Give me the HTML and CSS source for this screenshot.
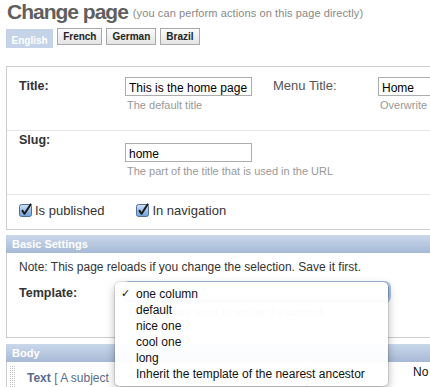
FILE: index.html
```html
<!DOCTYPE html>
<html lang="en">
<head>
<meta charset="utf-8">
<title>Change page</title>
<link rel="stylesheet" href="styles.css">
</head>
<body>
<div class="page">
  <h1 class="page-title">Change page<small class="page-subtitle">(you can perform actions on this page directly)</small></h1>

  <div class="tabs">
    <span class="tab tab-active">English</span>
    <span class="tab">French</span>
    <span class="tab">German</span>
    <span class="tab">Brazil</span>
  </div>

  <div class="module module-main">
    <div class="form-row row-title">
      <label class="field-label">Title:</label>
      <div class="field">
        <input class="text-input" type="text" value="This is the home page">
        <p class="help">The default title</p>
      </div>
      <label class="field-label-plain">Menu Title:</label>
      <div class="field">
        <input class="text-input" type="text" value="Home">
        <p class="help">Overwrite what is displayed in the menu</p>
      </div>
    </div>

    <div class="form-row row-slug">
      <label class="field-label">Slug:</label>
      <div class="field">
        <input class="text-input" type="text" value="home">
        <p class="help">The part of the title that is used in the URL</p>
      </div>
    </div>

    <div class="form-row row-check">
      <label class="check">
        <svg class="checkbox" width="14" height="14" viewBox="0 0 14 14">
          <defs><linearGradient id="cb1" x1="0" y1="0" x2="0" y2="1"><stop offset="0" stop-color="#cfe2f7"/><stop offset="1" stop-color="#6e9fd8"/></linearGradient></defs>
          <rect x="0.5" y="1.5" width="12" height="12" rx="2" fill="url(#cb1)" stroke="#4f6f9c"/>
          <path d="M3 7.2 L5.6 10.8 L12 0.8" fill="none" stroke="#1a1a1a" stroke-width="2" stroke-linejoin="round"/>
        </svg>
        <span>Is published</span>
      </label>
      <label class="check">
        <svg class="checkbox" width="14" height="14" viewBox="0 0 14 14">
          <defs><linearGradient id="cb2" x1="0" y1="0" x2="0" y2="1"><stop offset="0" stop-color="#cfe2f7"/><stop offset="1" stop-color="#6e9fd8"/></linearGradient></defs>
          <rect x="0.5" y="1.5" width="12" height="12" rx="2" fill="url(#cb2)" stroke="#4f6f9c"/>
          <path d="M3 7.2 L5.6 10.8 L12 0.8" fill="none" stroke="#1a1a1a" stroke-width="2" stroke-linejoin="round"/>
        </svg>
        <span>In navigation</span>
      </label>
    </div>
  </div>

  <div class="module module-basic">
    <h2 class="module-header">Basic Settings</h2>
    <div class="module-body">
      <p class="note">Note: This page reloads if you change the selection. Save it first.</p>
      <div class="template-row">
        <label class="field-label template-label">Template:</label>
        <div class="field">
          <div class="select-wrap">
            <div class="select"></div>
            <ul class="popup">
              <li class="popup-item"><span class="popup-check">&#10003;</span>one column</li>
              <li class="popup-item">default</li>
              <li class="popup-item">nice one</li>
              <li class="popup-item">cool one</li>
              <li class="popup-item">long</li>
              <li class="popup-item">Inherit the template of the nearest ancestor</li>
            </ul>
          </div>
          <p class="help help-template">The template used to render the content.</p>
        </div>
      </div>
    </div>
  </div>

  <div class="module module-body-plugins">
    <h2 class="module-header">Body</h2>
    <div class="plugin-row">
      <div class="plugin-cell">
        <span class="grip"></span>
        <span class="plugin-name"><b>Text</b> [ A subject</span>
      </div>
      <div class="plugin-flag">No</div>
    </div>
  </div>
</div>
</body>
</html>
```

FILE: styles.css
```css
* { box-sizing: border-box; }

html, body {
  margin: 0;
  padding: 0;
  background: #fff;
}

body {
  width: 430px;
  height: 387px;
  overflow: hidden;
  font-family: "Liberation Sans", Arial, sans-serif;
  color: #333;
}

.page {
  width: 900px;
  padding-left: 6px;
}

/* heading */
.page-title {
  margin: 0;
  padding-left: 1px;
  font-size: 21px;
  line-height: 24px;
  font-weight: bold;
  color: #5f5f5f;
  letter-spacing: -1px;
  white-space: nowrap;
}

.page-subtitle {
  margin-left: 5px;
  font-size: 11px;
  font-weight: normal;
  letter-spacing: 0.1px;
  color: #888;
  vertical-align: 2px;
}

/* language tabs */
.tabs {
  display: flex;
  align-items: flex-start;
  gap: 4px;
  margin-top: 3px;
}

.tab {
  height: 17px;
  padding: 0 5px;
  border: 1px solid #a8a8a8;
  background: linear-gradient(#fbfbfb, #e4e4e4);
  font-size: 10px;
  font-weight: bold;
  line-height: 15px;
  color: #222;
}

.tab-active {
  height: 19px;
  margin-top: 1px;
  padding: 4px 5.5px 0;
  border: none;
  background: #c4d3e8;
  color: #fff;
}

/* modules */
.module-main {
  margin-top: 18px;
  border: 1px solid #ccc;
}

.form-row {
  display: flex;
  align-items: flex-start;
  padding-left: 12px;
  border-bottom: 1px solid #e6e6e6;
}

.row-title {
  height: 64px;
  padding-top: 10px;
}

.row-slug {
  height: 64px;
  padding-top: 2px;
}

.row-slug .field {
  margin-top: 10px;
}

.row-check {
  height: 34px;
  padding-top: 8px;
  gap: 32px;
  border-bottom: none;
}

.field-label {
  width: 106px;
  flex: none;
  font-size: 12.5px;
  font-weight: bold;
  line-height: 15px;
  color: #333;
}

.row-title .field-label {
  margin-top: 2px;
}

.field-label-plain {
  width: 105px;
  flex: none;
  margin-left: 21px;
  margin-top: 1px;
  font-size: 13px;
  line-height: 15px;
  color: #555;
}

.text-input {
  display: block;
  width: 127px;
  height: 19px;
  margin: 0;
  padding: 2px 3px 0;
  border: 1px solid #adadad;
  background: #fff;
  font-family: "Liberation Sans", Arial, sans-serif;
  font-size: 12px;
  color: #000;
}

.help {
  margin: 3px 0 0;
  padding-left: 2px;
  font-size: 11px;
  line-height: 13px;
  color: #999;
  white-space: nowrap;
}

.check {
  display: flex;
  align-items: flex-start;
  gap: 2px;
  font-size: 13px;
  line-height: 16px;
  color: #333;
}

.checkbox {
  display: block;
  flex: none;
}

/* basic settings */
.module-basic {
  margin-top: 5px;
}

.module-header {
  height: 18px;
  margin: 0;
  padding: 1px 0 0 6px;
  background: linear-gradient(#cad8eb, #a6b9d5);
  font-size: 11px;
  font-weight: bold;
  line-height: 17px;
  color: #fff;
}

.module-body {
  padding: 7px 0 18px 12px;
  border-left: 1px solid #ccc;
  border-bottom: 1px solid #ccc;
}

.note {
  margin: 0;
  font-size: 12px;
  line-height: 15px;
  color: #333;
}

.template-row {
  display: flex;
  align-items: flex-start;
  margin-top: 8px;
}

.template-label {
  margin-top: 3px;
}

.select-wrap {
  position: relative;
  width: 264px;
}

.select {
  height: 18px;
  border: 1px solid #89abd9;
  border-radius: 4px;
  background: linear-gradient(#ffffff, #e9e9e9);
  box-shadow: 0 0 0 2px rgba(118, 160, 222, 0.6);
}

.help-template {
  margin-top: 5px;
}

.popup {
  position: absolute;
  left: -10px;
  top: -1px;
  z-index: 2;
  width: 273px;
  margin: 0;
  padding: 4px 0;
  list-style: none;
  background: rgba(255, 255, 255, 0.95);
  border-radius: 5px;
  box-shadow: 0 0 0 1px rgba(0, 0, 0, 0.1), 0 4px 10px rgba(0, 0, 0, 0.3);
}

.popup-item {
  position: relative;
  padding-left: 21px;
  font-size: 12px;
  line-height: 16px;
  color: #111;
  white-space: nowrap;
}

.popup-check {
  position: absolute;
  left: 6px;
  top: 0;
  font-family: "DejaVu Sans", sans-serif;
  font-size: 11px;
}

/* body plugins */
.module-body-plugins {
  margin-top: 6px;
}

.plugin-row {
  display: flex;
  height: 40px;
  border-left: 1px solid #ccc;
}

.plugin-cell {
  display: flex;
  align-items: flex-start;
  width: 300px;
  padding: 3px 0 0 2px;
  border-right: 1px solid #ddd;
}

.grip {
  width: 6px;
  height: 30px;
  flex: none;
  background-image:
    linear-gradient(90deg, #fff 1px, transparent 1px),
    linear-gradient(#fff 1px, #c4c4c4 1px);
  background-size: 2px 2px, 2px 2px;
}

.plugin-name {
  margin: 5.5px 0 0 12px;
  font-size: 12px;
  line-height: 15px;
  color: #5a6b8c;
  white-space: nowrap;
}

.plugin-flag {
  padding: 2.5px 0 0 106px;
  font-size: 12px;
  line-height: 15px;
  color: #111;
}
```
